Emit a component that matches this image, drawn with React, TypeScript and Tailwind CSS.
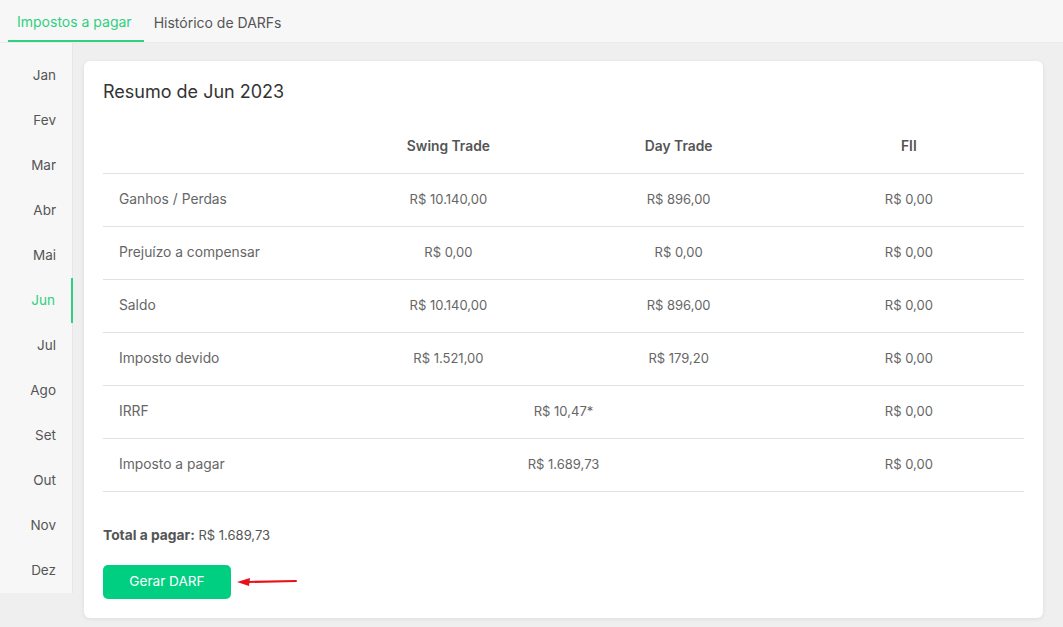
import React from "react";

const months = ["Jan", "Fev", "Mar", "Abr", "Mai", "Jun", "Jul", "Ago", "Set", "Out", "Nov", "Dez"];

type Row = { label: string; cells: string[]; span?: boolean };

const rows: Row[] = [
  { label: "Ganhos / Perdas", cells: ["R$ 10.140,00", "R$ 896,00", "R$ 0,00"] },
  { label: "Prejuízo a compensar", cells: ["R$ 0,00", "R$ 0,00", "R$ 0,00"] },
  { label: "Saldo", cells: ["R$ 10.140,00", "R$ 896,00", "R$ 0,00"] },
  { label: "Imposto devido", cells: ["R$ 1.521,00", "R$ 179,20", "R$ 0,00"] },
  { label: "IRRF", cells: ["R$ 10,47*", "R$ 0,00"], span: true },
  { label: "Imposto a pagar", cells: ["R$ 1.689,73", "R$ 0,00"], span: true },
];

export default function App() {
  return (
    <div
      className="w-[1063px] h-[627px] bg-[#efefef] flex flex-col overflow-hidden text-[#555]"
      style={{ fontFamily: "Inter, 'Open Sans', sans-serif" }}
    >
      <div className="h-[43px] bg-[#f7f7f7] border-b border-[#ebebeb] flex items-stretch pl-2 shrink-0">
        <div className="pl-[9px] pr-[12px] flex items-center text-[14px] text-[#2fd07f] border-b-2 border-[#2fd07f] pt-[3px]">
          Impostos a pagar
        </div>
        <div className="px-[10px] flex items-center text-[14px] text-[#555] pt-[3px]">Histórico de DARFs</div>
      </div>
      <div className="flex flex-1 min-h-0">
        <div className="w-[73px] shrink-0 flex flex-col">
          <div className="bg-[#f7f7f7] border-r border-[#e6e6e6] pt-[10px]">
            {months.map((m) => (
              <div
                key={m}
                className={
                  "h-[45px] flex items-center justify-end pr-[16px] text-[13.5px] " +
                  (m === "Jun"
                    ? "text-[#2fd07f] border-r-2 border-[#2fd07f] -mr-px"
                    : "text-[#555]")
                }
              >
                {m}
              </div>
            ))}
          </div>
        </div>
        <div className="flex-1 pl-[11px] pt-[18px] pr-[20px] pb-[9px]">
          <div className="h-full bg-white rounded-md shadow-[0_1px_4px_rgba(0,0,0,0.08)] px-[19px] pt-[19px]">
            <div className="text-[18px] leading-6 text-[#333]">Resumo de Jun 2023</div>
            <table className="w-full mt-[16px] border-collapse table-fixed text-[13px]">
              <thead>
                <tr className="h-[53px] border-b border-[#dde2e8]">
                  <th className="w-1/4"></th>
                  <th className="w-1/4 font-semibold text-[13.8px] text-[#555]">Swing Trade</th>
                  <th className="w-1/4 font-semibold text-[13.8px] text-[#555]">Day Trade</th>
                  <th className="w-1/4 font-semibold text-[13.8px] text-[#555]">FII</th>
                </tr>
              </thead>
              <tbody>
                {rows.map((r) => (
                  <tr key={r.label} className="h-[53px] border-b border-[#dde2e8]">
                    <td className="pl-4 text-left text-[13.8px] text-[#666]">{r.label}</td>
                    {r.span ? (
                      <>
                        <td colSpan={2} className="text-center text-[#666]">{r.cells[0]}</td>
                        <td className="text-center text-[#666]">{r.cells[1]}</td>
                      </>
                    ) : (
                      r.cells.map((c, i) => (
                        <td key={i} className="text-center text-[#666]">{c}</td>
                      ))
                    )}
                  </tr>
                ))}
              </tbody>
            </table>
            <div className="mt-[33px] text-[13px] leading-5 text-[#555]">
              <span className="font-bold text-[13.8px]">Total a pagar:</span> R$ 1.689,73
            </div>
            <div className="mt-[20px] flex items-center">
              <button className="w-[128px] h-[34px] rounded-[5px] bg-[#00cf82] text-white text-[13.6px]">
                Gerar DARF
              </button>
              <svg width="64" height="10" viewBox="0 0 64 10" className="ml-[5px]">
                <line x1="12" y1="5" x2="60" y2="4" stroke="#e8111a" strokeWidth="2" strokeLinecap="round" />
                <polygon points="1,5 14,1 13,9" fill="#e8111a" />
              </svg>
            </div>
          </div>
        </div>
      </div>
    </div>
  );
}
